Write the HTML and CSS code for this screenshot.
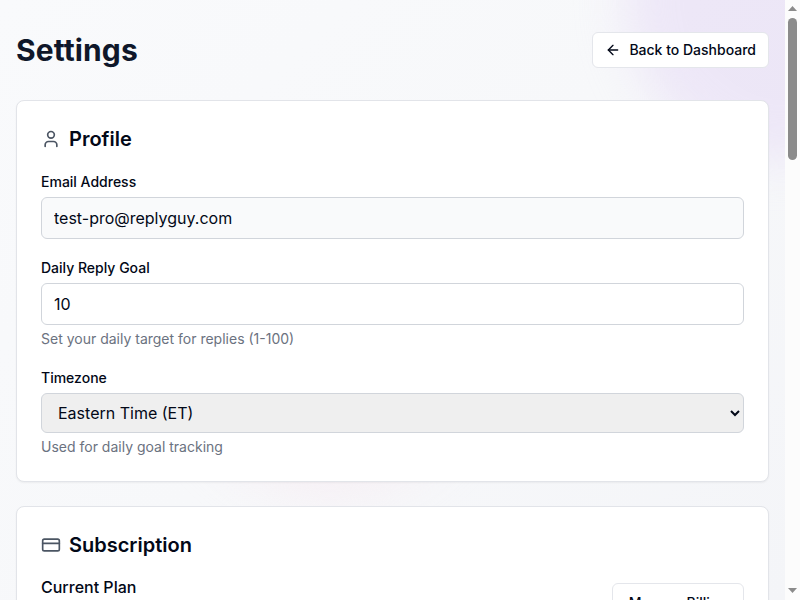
FILE: index.html
```html
<!DOCTYPE html>
<html lang="en">
<head>
<meta charset="utf-8">
<title>Settings</title>
<link rel="stylesheet" href="styles.css">
</head>
<body>
<div class="window">
  <div class="page">
    <div class="blob blob-purple"></div>
    <div class="blob blob-pink"></div>
    <main class="content">
      <header class="header">
        <h1>Settings</h1>
        <a class="button">
          <svg width="16" height="16" viewBox="0 0 24 24" fill="none" stroke="currentColor" stroke-width="2" stroke-linecap="round" stroke-linejoin="round"><path d="m12 19-7-7 7-7"/><path d="M19 12H5"/></svg>
          Back to Dashboard
        </a>
      </header>

      <section class="card">
        <h2>
          <svg width="20" height="20" viewBox="0 0 24 24" fill="none" stroke="currentColor" stroke-width="2" stroke-linecap="round" stroke-linejoin="round"><path d="M19 21v-2a4 4 0 0 0-4-4H9a4 4 0 0 0-4 4v2"/><circle cx="12" cy="7" r="4"/></svg>
          Profile
        </h2>
        <div class="field">
          <label for="email">Email Address</label>
          <input id="email" class="readonly" type="text" value="test-pro@replyguy.com" readonly>
        </div>
        <div class="field">
          <label for="goal">Daily Reply Goal</label>
          <input id="goal" type="text" value="10">
          <p>Set your daily target for replies (1-100)</p>
        </div>
        <div class="field">
          <label for="timezone">Timezone</label>
          <select id="timezone"><option>Eastern Time (ET)</option></select>
          <p>Used for daily goal tracking</p>
        </div>
      </section>

      <section class="card">
        <h2 class="subscription-title">
          <svg width="20" height="20" viewBox="0 0 24 24" fill="none" stroke="currentColor" stroke-width="2" stroke-linecap="round" stroke-linejoin="round"><rect width="20" height="14" x="2" y="5" rx="2"/><path d="M2 10h20"/></svg>
          Subscription
        </h2>
        <div class="plan">
          <h3>Current Plan</h3>
          <a class="button billing">Manage Billing</a>
        </div>
      </section>
    </main>
  </div>
  <div class="scrollbar">
    <svg width="9" height="5" viewBox="0 0 9 5"><path d="M0 5 4.500 0 9 5z"/></svg>
    <div class="track"><div class="thumb"></div></div>
    <svg width="9" height="5" viewBox="0 0 9 5"><path d="M0 0h9L4.500 5z"/></svg>
  </div>
</div>
</body>
</html>
```
FILE: styles.css
```css
* { box-sizing: border-box; margin: 0; }

body {
  font-family: Inter, sans-serif;
  font-size: 16px;
  line-height: 24px;
  color: #020817;
  overflow: hidden;
}

.window {
  display: grid;
  grid-template-columns: 1fr 15px;
  height: 600px;
  overflow: hidden;
}

.page {
  position: relative;
  overflow: hidden;
  height: 600px;
  background: linear-gradient(135deg, #f9fafc, #f7f8fa 50%, #f4f5f8);
}

.blob {
  position: absolute;
  border-radius: 50%;
}

.blob-purple {
  top: -160px;
  right: -160px;
  width: 320px;
  height: 320px;
  background: #e4d7f5;
  opacity: 0.5;
  filter: blur(24px);
}

.blob-pink {
  top: 200px;
  left: 180px;
  width: 300px;
  height: 300px;
  background: #f7e7ef;
  opacity: 0.45;
  filter: blur(24px);
}

.content {
  position: relative;
  padding: 32px 16px;
}

.header {
  display: flex;
  align-items: center;
  justify-content: space-between;
  margin-bottom: 32px;
}

h1 {
  font-size: 30px;
  line-height: 36px;
  font-weight: 700;
  letter-spacing: 0.1px;
  color: #0f172a;
}

.button {
  display: flex;
  align-items: center;
  gap: 8px;
  height: 36px;
  padding: 0 12px;
  border: 1px solid #e4e6eb;
  border-radius: 6px;
  background: #fff;
  font-size: 14px;
  line-height: 20px;
  font-weight: 500;
}

.card {
  padding: 24px;
  margin-bottom: 24px;
  border: 1px solid #e2e4e9;
  border-radius: 8px;
  background: #fff;
  box-shadow: 0 1px 2px rgb(0 0 0 / 5%);
}

h2 {
  display: flex;
  align-items: center;
  gap: 8px;
  margin-bottom: 19px;
  font-size: 20px;
  line-height: 28px;
  font-weight: 600;
}

h2 svg { color: #4b5563; }

.field + .field { margin-top: 19px; }

.field label {
  display: block;
  margin-bottom: 5px;
  font-size: 14px;
  line-height: 20px;
  font-weight: 500;
}

input, select {
  display: block;
  width: 100%;
  border: 1px solid #d1d5db;
  border-radius: 6px;
  font: inherit;
  color: inherit;
}

input {
  height: 42px;
  padding: 8px 12px;
  background: #fff;
}

.readonly { background: #f9fafb; }

select {
  height: 40px;
  padding: 8px 12px;
  background: #efefef;
}

.field p {
  margin-top: 4px;
  font-size: 14px;
  line-height: 20px;
  color: #6b7280;
}

.subscription-title { margin-bottom: 16px; }

.plan {
  display: flex;
  align-items: flex-start;
  justify-content: space-between;
}

h3 {
  font-size: 16px;
  line-height: 24px;
  font-weight: 500;
}

.billing {
  height: 40px;
  margin-top: 8px;
  padding: 0 16px;
}

.scrollbar {
  display: flex;
  flex-direction: column;
  align-items: center;
  padding: 6px 0 7px;
  background: #fcfcfc;
}

.scrollbar svg { fill: #8b8b8b; }

.track {
  flex: 1;
  padding-top: 7px;
}

.thumb {
  width: 9px;
  height: 142px;
  border-radius: 5px;
  background: #8b8b8b;
}
```
